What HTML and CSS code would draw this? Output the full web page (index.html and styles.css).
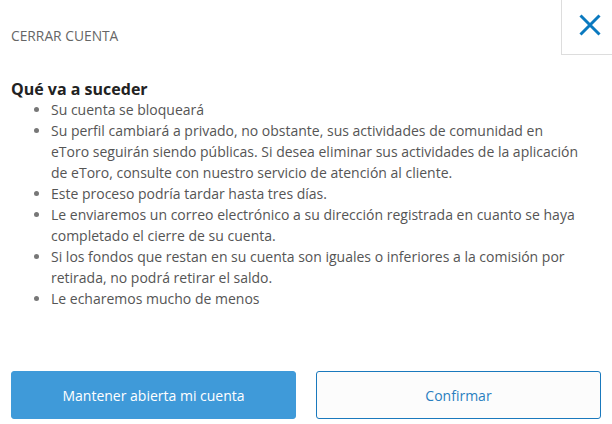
FILE: index.html
```html
<!DOCTYPE html>
<html lang="es">
<head>
<meta charset="utf-8">
<link rel="stylesheet" href="styles.css">
</head>
<body>
<div class="dialog">
  <header class="header">
    <div class="title">CERRAR CUENTA</div>
    <button class="close" aria-label="Cerrar">
      <svg width="22" height="22" viewBox="0 0 22 22"><path d="M1.5 1.5 L20.5 20.5 M20.5 1.5 L1.5 20.5" stroke="#0a79bf" stroke-width="3" fill="none"/></svg>
    </button>
  </header>
  <main class="content">
    <h2 class="heading">Qué va a suceder</h2>
    <ul class="list">
      <li>Su cuenta se bloqueará</li>
      <li>Su perfil cambiará a privado, no obstante, sus actividades de comunidad en eToro seguirán siendo públicas. Si desea eliminar sus actividades de la aplicación de eToro, consulte con nuestro servicio de atención al cliente.</li>
      <li>Este proceso podría tardar hasta tres días.</li>
      <li>Le enviaremos un correo electrónico a su dirección registrada en cuanto se haya completado el cierre de su cuenta.</li>
      <li>Si los fondos que restan en su cuenta son iguales o inferiores a la comisión por retirada, no podrá retirar el saldo.</li>
      <li>Le echaremos mucho de menos</li>
    </ul>
  </main>
  <footer class="actions">
    <button class="btn btn-primary">Mantener abierta mi cuenta</button>
    <button class="btn btn-secondary">Confirmar</button>
  </footer>
</div>
</body>
</html>
```
FILE: styles.css
```css
html, body {
  margin: 0;
  padding: 0;
  background: #ffffff;
}
body {
  font-family: "Open Sans", "Noto Sans", sans-serif;
  color: #555555;
}
.dialog {
  width: 612px;
  height: 424px;
  display: flex;
  flex-direction: column;
  box-sizing: border-box;
}
.header {
  display: flex;
  justify-content: space-between;
  align-items: flex-start;
  height: 55px;
}
.title {
  padding: 27px 0 0 11px;
  font-size: 13.8px;
  line-height: 18px;
  color: #666666;
}
.close {
  width: 51px;
  height: 55px;
  box-sizing: border-box;
  border: 0;
  border-left: 1px solid #dddddd;
  border-bottom: 1px solid #dddddd;
  background: #ffffff;
  display: flex;
  align-items: center;
  justify-content: center;
  padding: 0 0 4px 5px;
}
.close svg {
  display: block;
}
.content {
  flex: 1;
  padding: 24px 11px 0 11px;
}
.heading {
  margin: 0;
  font-size: 16px;
  line-height: 20px;
  font-weight: 700;
  color: #222222;
}
.list {
  margin: 0;
  padding: 0 19px 0 40px;
  font-size: 14px;
  line-height: 21px;
  color: #555555;
}
.list li::marker {
  color: #777777;
}
.actions {
  display: grid;
  grid-template-columns: 1fr 1fr;
  gap: 20px;
  padding: 0 11px 5px 11px;
}
.btn {
  height: 48px;
  border-radius: 3px;
  font-family: "Open Sans", "Noto Sans", sans-serif;
  font-size: 14px;
  cursor: pointer;
}
.btn-primary {
  background: #3f9ad9;
  border: 1px solid #3f9ad9;
  color: #ffffff;
}
.btn-secondary {
  background: #fcfcfc;
  border: 1px solid #1a79bd;
  color: #2a7fc0;
}
```
